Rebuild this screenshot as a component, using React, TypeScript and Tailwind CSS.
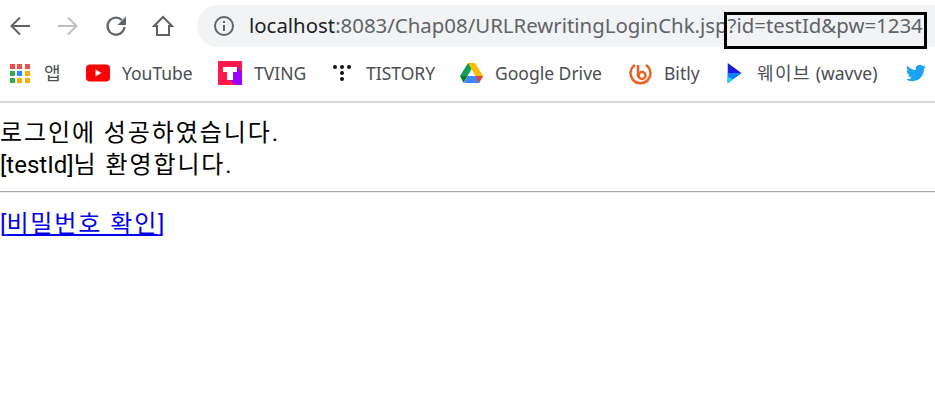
import { ReactNode } from 'react'

const sans = '"Noto Sans CJK KR", sans-serif'

function Bookmark({ icon, label, width }: { icon: ReactNode; label: ReactNode; width: string }) {
  return (
    <div className={`flex items-center shrink-0 ${width}`}>
      <span className="w-[24px] h-[24px] flex items-center justify-center shrink-0">{icon}</span>
      <span className="ml-[12px] text-[17.500px] leading-[24px] text-[#4a4d52] whitespace-nowrap font-['Noto_Sans','Noto_Sans_CJK_KR',sans-serif]">{label}</span>
    </div>
  )
}

function AppsIcon() {
  const colors = ['#ef4f4a', '#ef4f4a', '#ef4f4a', '#34a853', '#2d8cff', '#fbab04', '#34a853', '#fbab04', '#fbab04']
  return (
    <span className="grid grid-cols-3 gap-[2px] w-[20px]">
      {colors.map((c, i) => (
        <svg key={i} width="5" height="5"><rect width="5" height="5" fill={c} /></svg>
      ))}
    </span>
  )
}

function Ko({ children }: { children: ReactNode }) {
  return <span className="tracking-[1.9px]">{children}</span>
}

export default function App() {
  return (
    <div className="w-[935px] h-[400px] bg-white overflow-hidden" style={{ fontFamily: sans }}>
      <div className="h-[103px] border-b-2 border-[#d9dadc]">
        <div className="h-[46px] pt-[5px] flex items-center relative">
          <svg className="ml-[9px] shrink-0" width="22" height="22" viewBox="0 0 22 22" fill="none" stroke="#5f6368" strokeWidth="2"><path d="M21 11H2.500M11 2.500L2.500 11l8.500 8.500" /></svg>
          <svg className="ml-[26px] shrink-0" width="22" height="22" viewBox="0 0 22 22" fill="none" stroke="#bdbec0" strokeWidth="2"><path d="M1 11h18.500M11 2.500l8.500 8.500-8.500 8.500" /></svg>
          <svg className="ml-[25px] shrink-0" width="24" height="24" viewBox="0 0 24 24" fill="none"><path d="M20.500 13a8.500 8.500 0 1 1-2.600-7" stroke="#5f6368" strokeWidth="2.200" /><path d="M22 2.500v8.500h-8.500z" fill="#5f6368" /></svg>
          <svg className="ml-[23px] shrink-0" width="24" height="24" viewBox="0 0 24 24" fill="none" stroke="#5f6368" strokeWidth="2"><path d="M6 21v-9H3l9-9 9 9h-3v9z" /></svg>
          <div className="ml-[22px] flex-1 h-[42px] bg-[#f1f3f4] rounded-l-[21px] flex items-center">
            <svg className="ml-[16px] shrink-0" width="22" height="22" viewBox="0 0 22 22" fill="none"><circle cx="11" cy="11" r="9" stroke="#5f6368" strokeWidth="2" /><path d="M11 10v6M11 6v2" stroke="#5f6368" strokeWidth="2" /></svg>
            <span className="ml-[14px] text-[20.400px] whitespace-nowrap text-[#5f6368] font-['Noto_Sans',sans-serif]"><span className="text-[#202124]">localhost</span>:8083/Chap08/URLRewritingLoginChk.jsp?id=testId&amp;pw=1234</span>
          </div>
          <div className="absolute left-[724px] top-[12px] w-[203px] h-[37px] border-[3px] border-black" />
        </div>
        <div className="h-[55px] flex items-center pl-[8px] pb-[1px]">
          <Bookmark width="w-[78px]" icon={<AppsIcon />} label={<span className="text-[18px]">앱</span>} />
          <Bookmark width="w-[132px]" icon={<svg width="24" height="18" viewBox="0 0 24 18"><rect width="24" height="17" y="0.500" rx="4" fill="#ff0000" /><path d="M9.500 5.500v7l6-3.500z" fill="#fff" /></svg>} label="YouTube" />
          <Bookmark width="w-[112px]" icon={<svg width="24" height="24" viewBox="0 0 24 24"><rect width="24" height="24" fill="#ff1a4b" /><path d="M19 6l5 5v13h-7l-7-7z" fill="#9b00ff" /><path d="M5 6h14v5h-4v8h-6v-8H5z" fill="#fff" /></svg>} label="TVING" />
          <Bookmark width="w-[129px]" icon={<svg width="20" height="20" viewBox="0 0 20 20" fill="#111"><circle cx="3" cy="4" r="2" /><circle cx="10" cy="4" r="2" /><circle cx="17" cy="4" r="2" /><circle cx="10" cy="10" r="2" /><circle cx="10" cy="16" r="2" /></svg>} label="TISTORY" />
          <Bookmark width="w-[169px]" icon={<svg width="23" height="20" viewBox="0 0 23 20"><path d="M8 0h7l-7.500 13H0z" fill="#0f9d58" /><path d="M8 0h7l8 13h-7.500z" fill="#fbbc04" /><path d="M4 20h15l4-7H7.500z" fill="#4285f4" /><path d="M0 13l3.500 7L7.500 13z" fill="#00832d" /><path d="M23 13h-7l3 7z" fill="#ea4335" /></svg>} label="Google Drive" />
          <Bookmark width="w-[93px]" icon={<svg width="24" height="24" viewBox="0 0 24 24" fill="none" stroke="#ee6123" strokeWidth="2.500"><path d="M7 4a10 10 0 1 0 11 0" /><path d="M10 4v12" /><circle cx="14" cy="14.500" r="3.500" /></svg>} label="Bitly" />
          <Bookmark width="w-[180px]" icon={<svg className="ml-[4px]" width="16" height="20" viewBox="0 0 16 22"><path d="M0 0l15 11L0 22z" fill="#1a1ae0" /><path d="M0 11h15L0 22z" fill="#0a84ff" /><path d="M0 15l6 3-6 4z" fill="#21d4fd" /></svg>} label={<><span className="text-[18px] tracking-[1.500px]">웨이브</span> (wavve)</>} />
          <svg className="shrink-0 ml-[4px]" width="22" height="20" viewBox="0 0 24 24"><path fill="#1da1f2" d="M23.950 4.570a10 10 0 0 1-2.820.77 4.960 4.960 0 0 0 2.160-2.720c-.950.550-2 .950-3.130 1.180a4.920 4.920 0 0 0-8.380 4.480C7.690 8.090 4.060 6.130 1.640 3.160a4.820 4.820 0 0 0-.660 2.470c0 1.710.870 3.210 2.190 4.100a4.900 4.900 0 0 1-2.230-.620v.060a4.920 4.920 0 0 0 3.950 4.830 5 5 0 0 1-2.210.080 4.940 4.940 0 0 0 4.600 3.420A9.870 9.870 0 0 1 0 19.540a14 14 0 0 0 7.560 2.210c9.050 0 14-7.500 14-13.980 0-.210 0-.420-.020-.630a9.940 9.940 0 0 0 2.460-2.550z" /></svg>
        </div>
      </div>
      <div className="text-[24px] leading-[32px] text-black pt-[14px]" style={{ fontFamily: 'Roboto, "Noto Sans CJK KR", sans-serif' }}>
        <p><Ko>로그인에 성공하였습니다.</Ko></p>
        <p>[testId]<Ko>님 환영합니다.</Ko></p>
        <hr className="mt-[10px] border-t border-b border-t-[#a8a8a8] border-b-[#eeeeee]" />
        <p className="mt-[15px] text-[#0000ee]">[<a href="#" className="underline"><Ko>비밀번호 확인</Ko></a>]</p>
      </div>
    </div>
  )
}
